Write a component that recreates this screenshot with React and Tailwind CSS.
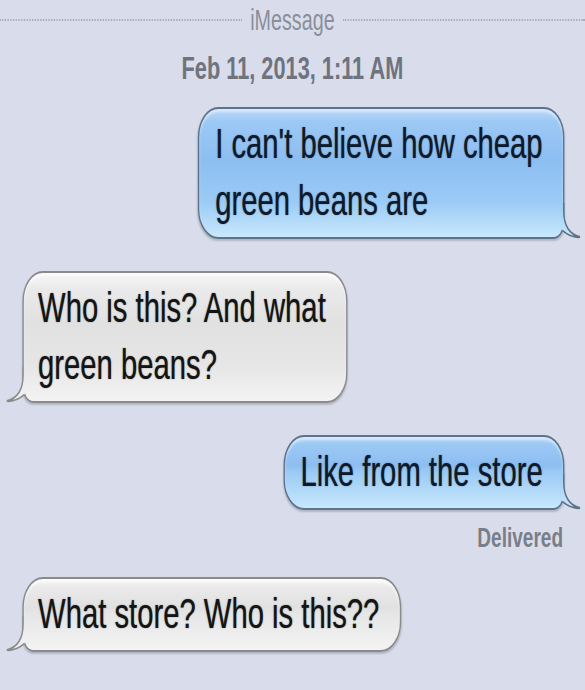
import clsx from 'clsx'

const messages = [
  { id: 1, from: 'me', lines: ["I can't believe how cheap", 'green beans are'] },
  { id: 2, from: 'them', lines: ['Who is this? And what', 'green beans?'] },
  { id: 3, from: 'me', lines: ['Like from the store'], status: 'Delivered' },
  { id: 4, from: 'them', lines: ['What store? Who is this??'] },
]

const palette = {
  me: { top: '#9acaf5', bottom: '#c8e8fc', stroke: '#5e7289' },
  them: { top: '#e6e6e6', bottom: '#f3f3f3', stroke: '#8a8a8a' },
}

function Tail({ side }) {
  const c = palette[side]
  const left = side === 'them'
  const gid = `tail-${side}`
  return (
    <svg
      viewBox="0 0 44 36"
      className={clsx(
        'absolute bottom-[-2px] h-[36px] w-[44px]',
        left ? 'left-[-26px]' : 'right-[-26px]'
      )}
    >
      <defs>
        <linearGradient id={gid} x1="0" y1="0" x2="0" y2="1">
          <stop offset="0" stopColor={c.top} />
          <stop offset="1" stopColor={c.bottom} />
        </linearGradient>
      </defs>
      <g transform={left ? 'translate(44 0) scale(-1 1)' : undefined}>
        <path
          d="M14 0 L19 0 L19 8 C19 22 26 31 43 34 C34 34.8 24 31.5 17 27.5 L14 24 Z"
          fill={`url(#${gid})`}
        />
        <path
          d="M19 0 L19 8 C19 22 26 31 43 34 C34 34.8 24 31.5 17 27.5"
          fill="none"
          stroke={c.stroke}
          strokeWidth="2"
        />
      </g>
    </svg>
  )
}

function Bubble({ from, lines }) {
  const mine = from === 'me'
  return (
    <div
      className={clsx(
        'relative w-fit rounded-[30px] border-2 pt-[6px] pb-[8px] text-[43px] leading-[57px] whitespace-nowrap [text-shadow:0_0_1.5px_rgba(0,0,0,0.55)]',
        mine
          ? 'rounded-br-[16px] border-[#5e7289] bg-[linear-gradient(to_top,#c8e8fc_0px,#9acaf5_36px,#8dbef2_60%,#9cc8f4_90%,#bcd9f7_100%)] pl-[23px] pr-[30px] text-[#0e1a2b] shadow-[inset_0_3px_3px_rgba(255,255,255,0.45),0_2px_2px_rgba(40,50,70,0.22)]'
          : 'rounded-bl-[16px] border-[#8a8a8a] bg-[linear-gradient(to_top,#f3f3f3_0px,#e6e6e6_36px,#e1e1e1_60%,#eaeaea_88%,#f8f8f8_100%)] pl-[21px] pr-[30px] text-[#141414] shadow-[inset_0_3px_3px_rgba(255,255,255,0.6),0_2px_2px_rgba(40,50,70,0.22)]'
      )}
    >
      {lines.map((line) => (
        <p key={line}>{line}</p>
      ))}
      <Tail side={from} />
    </div>
  )
}

export default function App() {
  return (
    <div className="h-[690px] w-[585px] overflow-hidden bg-[#d9ddeb] font-['Liberation_Sans',Arial,sans-serif]">
      <div className="flex w-[860px] origin-top-left scale-x-[0.68] flex-col">
        <div className="mt-[5px] flex items-center">
          <div className="flex-1 border-t-2 border-dotted border-[#a9adb8]" />
          <span className="px-[12px] text-[29px] leading-[30px] text-[#8b8f99]">iMessage</span>
          <div className="flex-1 border-t-2 border-dotted border-[#a9adb8]" />
        </div>
        <p className="mt-[15px] text-center text-[32px] font-bold leading-[36px] text-[#6f737e]">
          Feb 11, 2013, 1:11 AM
        </p>

        <div className="mt-[21px] flex flex-col">
          {messages.map((m, i) => (
            <div
              key={m.id}
              className={clsx(
                'flex flex-col',
                m.from === 'me' ? 'items-end pr-[30px]' : 'items-start pl-[33px]',
                i === 0 ? '' : messages[i - 1].status ? 'mt-[23px]' : 'mt-[32px]'
              )}
            >
              <Bubble from={m.from} lines={m.lines} />
              {m.status && (
                <p className="mt-[12px] mr-[2px] text-[28px] font-bold leading-[32px] text-[#7a7e88]">
                  {m.status}
                </p>
              )}
            </div>
          ))}
        </div>
      </div>
    </div>
  )
}
